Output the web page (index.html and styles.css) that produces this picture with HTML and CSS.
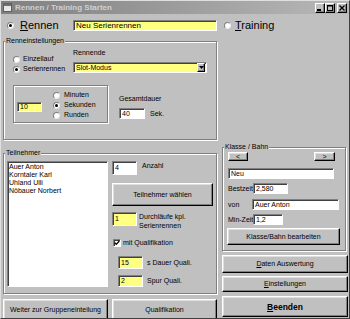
FILE: index.html
```html
<!DOCTYPE html>
<html lang="de">
<head>
<meta charset="utf-8">
<title>Rennen / Training Starten</title>
<link rel="stylesheet" href="styles.css">
</head>
<body>
<div class="window">
  <div class="titlebar">
    <svg class="ticon" width="9" height="9" viewBox="0 0 9 9"><rect x="0.5" y="0.5" width="8" height="8" fill="#e8e8e8" stroke="#606060"/><rect x="1" y="1" width="7" height="2" fill="#707070"/></svg>
    <span class="ttext">Rennen / Training Starten</span>
    <div class="tbtns">
      <span class="tb"><svg width="8" height="8" viewBox="0 0 8 8"><rect x="1" y="5" width="4" height="2" fill="#000"/></svg></span>
      <span class="tb"><svg width="8" height="8" viewBox="0 0 8 8"><rect x="1.5" y="1.5" width="5" height="5" fill="none" stroke="#000"/><rect x="1" y="1" width="6" height="1.5" fill="#000"/></svg></span>
      <span class="tb close"><svg width="8" height="8" viewBox="0 0 8 8"><path d="M1.5 1.5 L6.5 6.5 M6.5 1.5 L1.5 6.5" stroke="#000" stroke-width="1.3"/></svg></span>
    </div>
  </div>
  <div class="client">
    <div class="toprow">
      <div class="rlabel"><span class="radio on"></span><span class="big"><u>R</u>ennen</span></div>
      <div class="field yellow name">Neu Serienrennen</div>
      <div class="rlabel training"><span class="radio"></span><span class="big"><u>T</u>raining</span></div>
    </div>
    <div class="main">
      <div class="col1">
        <fieldset class="group">
          <legend>Renneinstellungen</legend>
          <div class="rennein-body">
            <div class="r-row1">
              <div class="radios modus">
                <div class="ropt"><span class="radio"></span><span>Einzellauf</span></div>
                <div class="ropt"><span class="radio on"></span><span>Serienrennen</span></div>
              </div>
              <div class="rennende">
                <div class="lbl">Rennende</div>
                <div class="field yellow combo"><span class="ctext">Slot-Modus</span><span class="cbtn"><svg width="5" height="3" viewBox="0 0 5 3"><path d="M0 0 H5 L2.5 3 Z" fill="#000"/></svg></span></div>
              </div>
            </div>
            <div class="r-row2">
              <div class="etched dauerbox">
                <div class="field yellow dauer">10</div>
                <div class="radios einheit">
                  <div class="ropt"><span class="radio"></span><span>Minuten</span></div>
                  <div class="ropt"><span class="radio on"></span><span>Sekunden</span></div>
                  <div class="ropt"><span class="radio"></span><span>Runden</span></div>
                </div>
              </div>
              <div class="gesamt">
                <div class="lbl">Gesamtdauer</div>
                <div class="gesamt-row"><div class="field g40">40</div><span class="sek">Sek.</span></div>
              </div>
            </div>
          </div>
        </fieldset>
        <fieldset class="group teil">
          <legend>Teilnehmer</legend>
          <div class="teil-body">
            <div class="field listbox">
              <div>Auer Anton</div>
              <div>Korntaler Karl</div>
              <div>Uhland Ulli</div>
              <div>Nöbauer Norbert</div>
            </div>
            <div class="teil-mid">
              <div class="mrow anz"><div class="field n4">4</div><span class="anzlbl">Anzahl</span></div>
              <button class="btn wahl">Teilnehmer wählen</button>
              <div class="mrow durch"><div class="field yellow n4">1</div><span class="durchlbl">Durchläufe kpl.<br>Serienrennen</span></div>
              <div class="mrow chk"><span class="checkbox"><svg width="6" height="6" viewBox="0 0 6 6"><path d="M0.8 2.8 L2.3 4.4 L5.3 1" fill="none" stroke="#000" stroke-width="1.3"/></svg></span><span class="chklbl">mit Qualifikation</span></div>
              <div class="mrow q q1"><div class="field yellow nq">15</div><span class="qlbl">s Dauer Quali.</span></div>
              <div class="mrow q q2"><div class="field yellow nq2">2</div><span class="qlbl">Spur Quali.</span></div>
            </div>
          </div>
        </fieldset>
        <div class="btnrow">
          <button class="btn bottom">Weiter zur Gruppeneinteilung</button>
          <button class="btn bottom">Qualifikation</button>
        </div>
      </div>
      <div class="col2">
        <fieldset class="group klasse">
          <legend>Klasse / Bahn</legend>
          <div class="klasse-body">
            <div class="nav"><button class="btn navbtn">&lt;</button><button class="btn navbtn nr">&gt;</button></div>
            <div class="field neu">Neu</div>
            <div class="kb-row best"><span class="kblbl">Bestzeit</span><div class="field fbest">2,580</div></div>
            <div class="kb-row von"><span class="kblbl vonlbl">von</span><div class="field fvon">Auer Anton</div></div>
            <div class="kb-row minz"><span class="kblbl">Min-Zeit</span><div class="field fmin">1,2</div></div>
            <button class="btn kbtn">Klasse/Bahn bearbeiten</button>
          </div>
        </fieldset>
        <button class="btn daten"><span><u>D</u>aten Auswertung</span></button>
        <button class="btn einst"><span><u>E</u>instellungen</span></button>
        <button class="btn beenden"><span><u>B</u>eenden</span></button>
      </div>
    </div>
  </div>
</div>
</body>
</html>
```

FILE: styles.css
```css
* { box-sizing: border-box; }
html, body { margin: 0; padding: 0; }
body {
  background: #c0c0c0;
  font-family: "Liberation Sans", Arial, sans-serif;
  font-size: 7px;
  line-height: 8px;
  color: #000;
}
.window {
  width: 350px;
  height: 319px;
  border: 1px solid;
  border-color: #dfdfdf #404040 #404040 #dfdfdf;
  background: #c0c0c0;
  overflow: hidden;
}
.titlebar {
  height: 13px;
  display: flex;
  align-items: center;
  padding-left: 2px;
  background: linear-gradient(to right, #808080, #b8b8b8);
}
.ticon { flex: none; }
.ttext {
  flex: 1;
  margin-left: 3px;
  font-size: 8px;
  font-weight: bold;
  color: #d0d0d0;
  white-space: nowrap;
}
.tbtns { display: flex; margin-right: 2px; }
.tb {
  width: 10px;
  height: 10px;
  display: flex;
  align-items: center;
  justify-content: center;
  background: #c0c0c0;
  border: 1px solid;
  border-color: #fff #000 #000 #fff;
  box-shadow: inset -1px -1px 0 #808080;
}
.tb.close { margin-left: 2px; }

.client { padding: 0 1px 0 2px; }

.toprow { height: 23px; display: flex; align-items: center; }
.rlabel { display: flex; align-items: center; width: 70px; }
.rlabel .radio { margin-left: 4px; }
.big { font-size: 11px; line-height: 13px; margin-left: 6px; }
.rlabel.training { width: auto; margin-left: 7px; }
.rlabel.training .radio { margin-left: 0; }
.rlabel.training .big { margin-left: 4px; }

.field {
  display: flex;
  align-items: center;
  background: #fff;
  border: 1px solid;
  border-color: #808080 #fff #fff #808080;
  box-shadow: inset 1px 1px 0 #404040;
  padding-left: 2px;
  white-space: nowrap;
  overflow: hidden;
  flex: none;
}
.yellow { background: #ffff80; }
.name { width: 144px; height: 11px; font-size: 8px; }

.radio {
  width: 7px;
  height: 7px;
  flex: none;
  border-radius: 50%;
  background: #fff;
  border: 1px solid;
  border-color: #808080 #e8e8e8 #e8e8e8 #808080;
  position: relative;
}
.radio.on::after {
  content: "";
  position: absolute;
  left: 1px;
  top: 1px;
  width: 3px;
  height: 3px;
  border-radius: 50%;
  background: #000;
}

.main { display: flex; column-gap: 5px; }
.col1 { width: 214px; display: flex; flex-direction: column; }
.col2 { width: 126px; display: flex; flex-direction: column; }

.group {
  margin: 0;
  padding: 0;
  min-width: 0;
  border: 1px solid #808080;
  box-shadow: inset 1px 1px 0 #fff, 1px 1px 0 #fff;
}
.group legend {
  padding: 0 1px;
  margin-left: 1px;
  font-size: 7px;
  line-height: 8px;
  background: #c0c0c0;
}
.etched {
  border: 1px solid #808080;
  box-shadow: inset 1px 1px 0 #fff, 1px 1px 0 #fff;
}

.rennein-body { height: 90px; }
.r-row1 { display: flex; align-items: flex-start; margin-top: 4px; }
.radios { display: flex; flex-direction: column; }
.ropt { height: 10px; display: flex; align-items: center; white-space: nowrap; }
.ropt .radio { margin-right: 3px; }
.modus { width: 60px; margin-left: 9px; margin-top: 5px; }
.lbl { height: 8px; white-space: nowrap; }
.combo { width: 134px; height: 11px; margin-top: 5px; padding-right: 1px; }
.ctext { flex: 1; }
.cbtn {
  width: 8px;
  height: 9px;
  display: flex;
  align-items: center;
  justify-content: center;
  background: #c0c0c0;
  border: 1px solid;
  border-color: #fff #000 #000 #fff;
  box-shadow: inset -1px -1px 0 #808080;
}
.r-row2 { display: flex; align-items: flex-start; margin-top: 11px; }
.dauerbox { width: 95px; height: 38px; margin-left: 9px; display: flex; align-items: flex-start; }
.dauer { width: 25px; height: 10px; margin-left: 3px; margin-top: 16px; }
.einheit { margin-left: 11px; margin-top: 4px; }
.einheit .ropt .radio { margin-right: 4px; }
.gesamt { margin-left: 11px; margin-top: 10px; }
.gesamt-row { display: flex; align-items: center; margin-top: 5px; }
.g40 { width: 26px; height: 11px; }
.sek { margin-left: 5px; }

.teil { margin-top: 9px; }
.teil-body { height: 136px; display: flex; align-items: flex-start; }
.listbox {
  display: block;
  width: 101px;
  height: 126px;
  margin-left: 3px;
  margin-top: 4px;
  padding: 1px 0 0 1px;
}
.teil-mid { width: 101px; margin-left: 4px; margin-top: 4px; display: flex; flex-direction: column; }
.mrow { display: flex; align-items: flex-start; white-space: nowrap; }
.n4 { width: 25px; height: 14px; }
.anzlbl { margin-left: 5px; margin-top: 1px; }
.btn {
  display: flex;
  align-items: center;
  justify-content: center;
  margin: 0;
  padding: 0;
  font: inherit;
  color: #000;
  background: #c0c0c0;
  border: 1px solid;
  border-color: #fff #000 #000 #fff;
  box-shadow: inset -1px -1px 0 #808080, inset 1px 1px 0 #dfdfdf;
  white-space: nowrap;
}
.wahl { width: 101px; height: 23px; margin-top: 8px; }
.durch { margin-top: 6px; }
.durchlbl { margin-left: 2px; line-height: 9px; }
.chk { margin-top: 9px; align-items: center; }
.checkbox {
  width: 8px;
  height: 8px;
  margin-left: 1px;
  display: flex;
  align-items: center;
  justify-content: center;
  background: #fff;
  border: 1px solid;
  border-color: #808080 #fff #fff #808080;
  box-shadow: inset 1px 1px 0 #404040;
}
.chklbl { margin-left: 2px; }
.q { align-items: center; margin-left: 6px; }
.q1 { margin-top: 9px; }
.q2 { margin-top: 6px; }
.nq { width: 25px; height: 13px; }
.nq2 { width: 25px; height: 12px; }
.qlbl { margin-left: 4px; }

.btnrow { display: flex; justify-content: space-between; margin-top: 5px; }
.bottom { width: 105px; height: 22px; }

.klasse { width: 124px; margin-top: 106px; }
.klasse-body { height: 99px; display: flex; flex-direction: column; align-items: flex-start; }
.nav { width: 100%; display: flex; justify-content: space-between; margin-top: 1px; padding: 0 10px 0 5px; }
.navbtn { width: 20px; height: 9px; }
.navbtn.nr { width: 21px; }
.neu { width: 106px; height: 11px; margin-top: 7px; margin-left: 5px; }
.kb-row { display: flex; align-items: center; margin-left: 5px; white-space: nowrap; }
.kblbl { width: 25px; }
.vonlbl { width: 24px; }
.best { margin-top: 4px; }
.von { margin-top: 5px; }
.minz { margin-top: 4px; }
.fbest { width: 35px; height: 11px; }
.fvon { width: 87px; height: 11px; }
.fmin { width: 30px; height: 11px; }
.kbtn { width: 113px; height: 17px; margin-top: 3px; margin-left: 4px; }

.daten { width: 126px; height: 18px; margin-top: 4px; }
.einst { width: 126px; height: 16px; margin-top: 3px; }
.beenden { width: 126px; height: 21px; margin-top: 4px; font-weight: bold; font-size: 8.5px; }
```
